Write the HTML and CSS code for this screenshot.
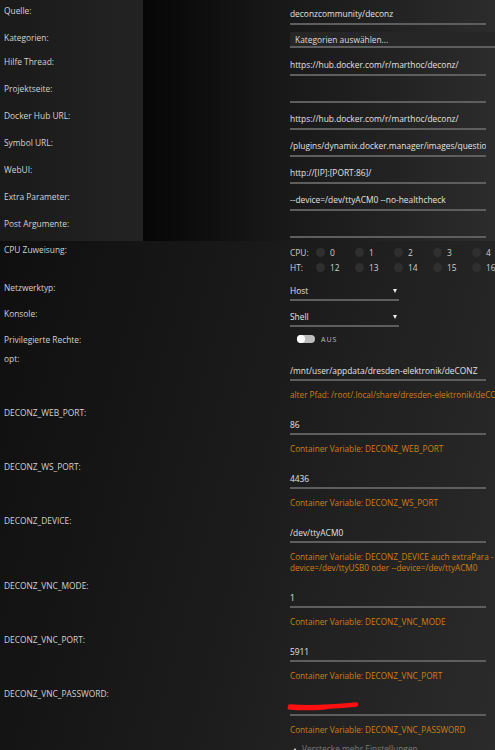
FILE: index.html
```html
<!DOCTYPE html>
<html lang="de">
<head>
<meta charset="utf-8">
<title>deconz</title>
<link rel="stylesheet" href="styles.css">
</head>
<body>
<div class="page">
  <section class="top">
    <div class="row"><div class="label">Quelle:</div><div class="input">deconzcommunity/deconz</div></div>
    <div class="row row-cat"><div class="label">Kategorien:</div><div class="catbox">Kategorien auswählen...</div></div>
    <div class="row"><div class="label">Hilfe Thread:</div><div class="input">https://hub.docker.com/r/marthoc/deconz/</div></div>
    <div class="row"><div class="label">Projektseite:</div><div class="input"></div></div>
    <div class="row"><div class="label">Docker Hub URL:</div><div class="input">https://hub.docker.com/r/marthoc/deconz/</div></div>
    <div class="row"><div class="label">Symbol URL:</div><div class="input">/plugins/dynamix.docker.manager/images/question.png</div></div>
    <div class="row"><div class="label">WebUI:</div><div class="input">http://[IP]:[PORT:86]/</div></div>
    <div class="row"><div class="label">Extra Parameter:</div><div class="input">--device=/dev/ttyACM0 --no-healthcheck</div></div>
    <div class="row"><div class="label">Post Argumente:</div><div class="input"></div></div>
  </section>

  <section class="bottom">
    <div class="row row-cpu">
      <div class="label">CPU Zuweisung:</div>
      <div class="cpus">
        <div class="cpu-line"><span class="cpu-tag">CPU:</span>
          <span class="core"><i class="dot"></i>0</span><span class="core"><i class="dot"></i>1</span><span class="core"><i class="dot"></i>2</span><span class="core"><i class="dot"></i>3</span><span class="core"><i class="dot"></i>4</span>
        </div>
        <div class="cpu-line"><span class="cpu-tag">HT:</span>
          <span class="core"><i class="dot"></i>12</span><span class="core"><i class="dot"></i>13</span><span class="core"><i class="dot"></i>14</span><span class="core"><i class="dot"></i>15</span><span class="core"><i class="dot"></i>16</span>
        </div>
      </div>
    </div>

    <div class="row row-sel"><div class="label">Netzwerktyp:</div><div class="select">Host<i class="caret"></i></div></div>
    <div class="row row-sel"><div class="label">Konsole:</div><div class="select">Shell<i class="caret"></i></div></div>
    <div class="row row-priv"><div class="label">Privilegierte Rechte:</div><div class="switch"><span class="pill"><i class="knob"></i></span><span class="aus">AUS</span></div></div>

    <div class="row var"><div class="label">opt:</div><div class="field"><div class="vinput">/mnt/user/appdata/dresden-elektronik/deCONZ</div><div class="desc">alter Pfad: /root/.local/share/dresden-elektronik/deCONZ</div></div></div>
    <div class="row var"><div class="label">DECONZ_WEB_PORT:</div><div class="field"><div class="vinput">86</div><div class="desc">Container Variable: DECONZ_WEB_PORT</div></div></div>
    <div class="row var"><div class="label">DECONZ_WS_PORT:</div><div class="field"><div class="vinput">4436</div><div class="desc">Container Variable: DECONZ_WS_PORT</div></div></div>
    <div class="row var"><div class="label">DECONZ_DEVICE:</div><div class="field"><div class="vinput">/dev/ttyACM0</div><div class="desc">Container Variable: DECONZ_DEVICE auch extraPara -<br>device=/dev/ttyUSB0 oder --device=/dev/ttyACM0</div></div></div>
    <div class="row var"><div class="label">DECONZ_VNC_MODE:</div><div class="field"><div class="vinput">1</div><div class="desc">Container Variable: DECONZ_VNC_MODE</div></div></div>
    <div class="row var"><div class="label">DECONZ_VNC_PORT:</div><div class="field"><div class="vinput">5911</div><div class="desc">Container Variable: DECONZ_VNC_PORT</div></div></div>
    <div class="row var"><div class="label">DECONZ_VNC_PASSWORD:</div><div class="field"><div class="vinput vpass"><svg class="scribble" width="80" height="12" viewBox="0 0 80 12"><path d="M4 6.5 C 20 8, 45 7, 70 4.5" stroke="#ff1010" stroke-width="4.5" stroke-linecap="round" fill="none"/><path d="M3 8 C 14 9.5, 26 9, 40 8" stroke="#ff1010" stroke-width="3" stroke-linecap="round" fill="none"/></svg></div><div class="desc">Container Variable: DECONZ_VNC_PASSWORD</div></div></div>

    <div class="more"><i class="tri"></i>Verstecke mehr Einstellungen</div>
  </section>
</div>
</body>
</html>
```

FILE: styles.css
```css
html, body {
  margin: 0;
  padding: 0;
  background: #161616;
}
body {
  width: 495px;
  height: 750px;
  overflow: hidden;
  font-family: "Open Sans", "DejaVu Sans", sans-serif;
  font-size: 8.4px;
  color: #d4d4d4;
}
.page {
  width: 495px;
  height: 750px;
  overflow: hidden;
}
.top {
  height: 241px;
  background: linear-gradient(to right, #1a1a1a 0, #232323 143px, #060606 143px, #161616 260px, #2c2c2c 495px);
}
.bottom {
  height: 509px;
  padding-top: 4px;
  box-sizing: border-box;
  background: linear-gradient(105deg, #0f0f0f 0%, #1a1a1a 45%, #2b2b2b 100%);
}
.row {
  display: grid;
  grid-template-columns: 290px 205px;
  height: 27px;
}
.label {
  padding: 6px 0 0 4px;
  line-height: 10px;
  white-space: nowrap;
  color: #d2d2d2;
}
.input {
  width: 196px;
  box-sizing: border-box;
  padding: 9px 0 4px;
  height: 25px;
  line-height: 10px;
  border-bottom: 2px solid #5e5e5e;
  white-space: nowrap;
  overflow: hidden;
  color: #e2e2e2;
}
.row-cat { height: 24px; }
.catbox {
  margin-top: 5px;
  height: 16px;
  width: 215px;
  box-sizing: border-box;
  background: #262626;
  border-bottom: 2px solid #5e5e5e;
  padding: 3px 0 0 5px;
  line-height: 10px;
  color: #dcdcdc;
  white-space: nowrap;
}

/* CPU */
.row-cpu { height: 38px; }
.row-cpu .label { padding-top: 0; }
.cpus { display: flex; flex-direction: column; min-width: 0; }
.cpu-line {
  display: flex;
  align-items: center;
  height: 15px;
  white-space: nowrap;
  color: #cfcfcf;
}
.cpu-tag { width: 26px; flex: none; }
.core {
  display: flex;
  align-items: center;
  width: 39px;
  flex: none;
}
.dot {
  width: 9px;
  height: 9px;
  border-radius: 50%;
  background: #2f2f2f;
  margin-right: 5px;
  flex: none;
}

/* selects */
.row-sel { height: 26px; }
.row-sel .label { padding-top: 0; }
.select {
  position: relative;
  width: 109px;
  height: 18px;
  box-sizing: border-box;
  padding-top: 3px;
  line-height: 10px;
  border-bottom: 2px solid #5e5e5e;
  color: #e2e2e2;
}
.caret {
  position: absolute;
  right: 2px;
  top: 6px;
  width: 0;
  height: 0;
  border-left: 2.5px solid transparent;
  border-right: 2.5px solid transparent;
  border-top: 4px solid #eeeeee;
}

/* switch */
.row-priv { height: 19px; }
.row-priv .label { padding-top: 0; }
.switch {
  display: flex;
  align-items: center;
  height: 8px;
  padding-left: 7px;
}
.pill {
  display: block;
  width: 18px;
  height: 8px;
  border-radius: 4px;
  background: #bdbdbd;
  position: relative;
}
.knob {
  position: absolute;
  left: 0;
  top: 0;
  width: 8px;
  height: 8px;
  border-radius: 50%;
  background: #ffffff;
}
.aus {
  margin-left: 6px;
  font-size: 7px;
  letter-spacing: 1px;
  color: #bdbdbd;
}

/* variables */
.var { height: auto; }
.var .label { padding-top: 0; }
.field { padding-bottom: 8px; }
.vinput {
  position: relative;
  width: 196px;
  box-sizing: border-box;
  padding: 12px 0 3px;
  line-height: 10px;
  height: 27px;
  border-bottom: 2px solid #5e5e5e;
  color: #e2e2e2;
  white-space: nowrap;
}
.scribble {
  position: absolute;
  left: -4px;
  top: 11px;
  filter: blur(0.4px);
}
.desc {
  margin-top: 8px;
  line-height: 11px;
  font-size: 8.2px;
  color: #cf7f12;
  white-space: nowrap;
}
.more {
  display: flex;
  align-items: center;
  gap: 5px;
  padding-left: 293px;
  margin-top: 1px;
  color: #7a7a7a;
  line-height: 10px;
}
.tri {
  width: 0;
  height: 0;
  border-left: 2px solid transparent;
  border-right: 2px solid transparent;
  border-bottom: 3px solid #dddddd;
}
```
